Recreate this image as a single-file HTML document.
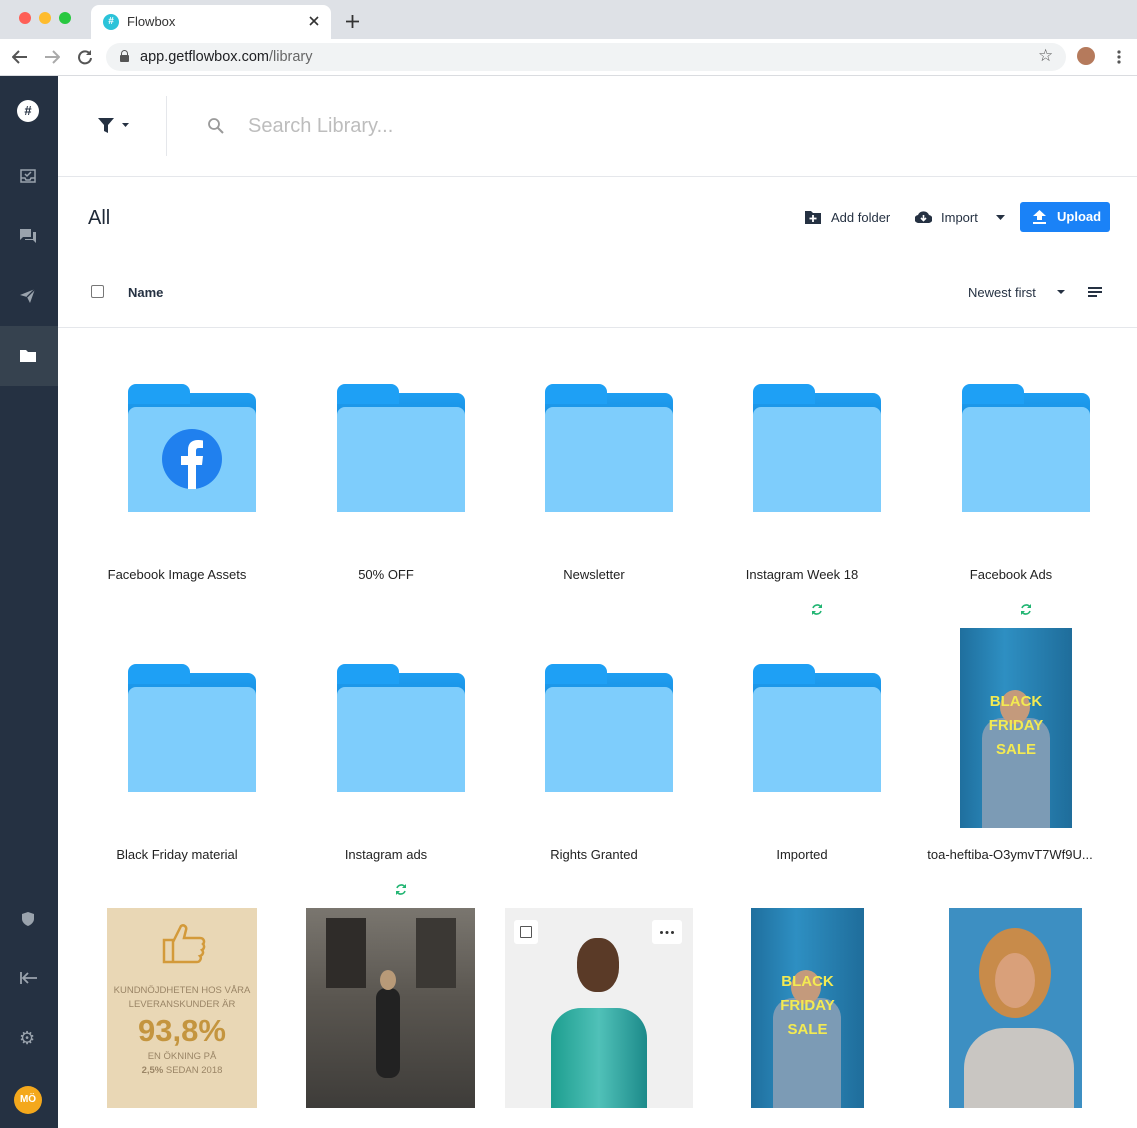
<!DOCTYPE html><html><head><style>
*{margin:0;padding:0;box-sizing:border-box}
body{width:1137px;height:1128px;overflow:hidden;font-family:"Liberation Sans",sans-serif;background:#fff;position:relative;color:#1f2937}
.a{position:absolute}
.fold{position:absolute;width:128px;height:128px}
.fold .t{position:absolute;left:0;top:0;width:62px;height:20px;background:#1ea0f5;border-radius:8px 8px 0 0}
.fold .b{position:absolute;left:0;top:9px;width:128px;height:40px;background:linear-gradient(#1f9ff2,#1587d8);border-radius:8px 8px 0 0}
.fold .f{position:absolute;left:0;top:23px;width:128px;height:105px;background:#7ecdfc;border-radius:8px 8px 0 0}
.lbl{position:absolute;width:200px;text-align:center;font-size:13px;color:#222}
.sync{position:absolute}
svg{position:absolute}
</style></head><body>
<!-- browser chrome -->
<div class="a" style="left:0;top:0;width:1137px;height:39px;background:#dee1e6"></div>
<div class="a" style="left:19px;top:12px;width:12px;height:12px;border-radius:50%;background:#fe5f57"></div>
<div class="a" style="left:39px;top:12px;width:12px;height:12px;border-radius:50%;background:#febc2e"></div>
<div class="a" style="left:59px;top:12px;width:12px;height:12px;border-radius:50%;background:#28c840"></div>
<div class="a" style="left:91px;top:5px;width:240px;height:34px;background:#fff;border-radius:8px 8px 0 0"></div>
<div class="a" style="left:103px;top:14px;width:16px;height:16px;border-radius:50%;background:#2bc3d9;color:#fff;font-size:10px;font-weight:bold;text-align:center;line-height:16px">#</div>
<div class="a" style="left:127px;top:14px;font-size:13px;color:#333">Flowbox</div>
<svg style="left:309px;top:16px" width="10" height="10"><path d="M1 1L9 9M9 1L1 9" stroke="#333" stroke-width="1.6"/></svg>
<svg style="left:346px;top:15px" width="13" height="13"><path d="M6.5 0V13M0 6.5H13" stroke="#333" stroke-width="1.8"/></svg>
<div class="a" style="left:0;top:39px;width:1137px;height:37px;background:#fff;border-bottom:1px solid #dadce0"></div>
<svg style="left:12px;top:50px" width="16" height="14"><path d="M15 7H2M7 1L1 7L7 13" stroke="#555" stroke-width="2" fill="none"/></svg>
<svg style="left:44px;top:50px" width="16" height="14"><path d="M1 7H14M9 1L15 7L9 13" stroke="#aaa" stroke-width="2" fill="none"/></svg>
<svg style="left:77px;top:49px" width="16" height="16"><path d="M13 5A6 6 0 1 0 14 9" stroke="#555" stroke-width="2" fill="none"/><path d="M14 1V6H9" fill="#555"/></svg>
<div class="a" style="left:106px;top:43px;width:960px;height:28px;background:#f1f3f4;border-radius:14px"></div>
<div class="a" style="left:120px;top:55px;width:9px;height:7px;background:#555;border-radius:1px"></div>
<div class="a" style="left:121px;top:50px;width:7px;height:7px;border:1.5px solid #555;border-radius:4px 4px 0 0"></div>
<div class="a" style="left:140px;top:49px;font-size:14.5px;color:#202124">app.getflowbox.com<span style="color:#666">/library</span></div>
<div class="a" style="left:1038px;top:46px;font-size:17px;color:#555">☆</div>
<div class="a" style="left:1077px;top:47px;width:18px;height:18px;border-radius:50%;background:#b57a5c"></div>
<svg style="left:1117px;top:50px" width="4" height="14"><circle cx="2" cy="2" r="1.6" fill="#555"/><circle cx="2" cy="7" r="1.6" fill="#555"/><circle cx="2" cy="12" r="1.6" fill="#555"/></svg>
<!-- sidebar -->
<div class="a" style="left:0;top:76px;width:58px;height:1052px;background:#253142">
<div class="a" style="left:0;top:250px;width:58px;height:60px;background:#36424f"></div>
<div class="a" style="left:17px;top:24px;width:22px;height:22px;border-radius:50%;background:#fff;color:#253142;font-weight:bold;font-size:13px;text-align:center;line-height:22px">#</div>
<svg style="left:20px;top:93px" width="16" height="14"><path d="M1 1H15V13H1Z M1 9H5L6 11H10L11 9H15" stroke="#9aa3ad" stroke-width="1.5" fill="none"/><path d="M5 5L7 7L11 3" stroke="#9aa3ad" stroke-width="1.5" fill="none"/></svg>
<svg style="left:20px;top:153px" width="16" height="14"><path d="M0 0H11V8H3L0 11Z" fill="#9aa3ad"/><path d="M13 3H16V14L13 11H5V10H13Z" fill="#9aa3ad"/></svg>
<svg style="left:20px;top:213px" width="16" height="14"><path d="M0 6L15 0L10 14L7 8Z" fill="#9aa3ad"/><path d="M7 8L15 0" stroke="#253142" stroke-width="1.3"/></svg>
<svg style="left:20px;top:273px" width="16" height="13"><path d="M0 1H6L8 3H16V13H0Z" fill="#fff"/></svg>
<svg style="left:22px;top:836px" width="12" height="14"><path d="M6 0L12 2V7C12 10 9 13 6 14C3 13 0 10 0 7V2Z" fill="#9aa3ad"/></svg>
<svg style="left:20px;top:896px" width="17" height="12"><path d="M1 0V12M3 6H17M8 1L3 6L8 11" stroke="#9aa3ad" stroke-width="1.8" fill="none"/></svg>
<div class="a" style="left:19px;top:952px;color:#9aa3ad;font-size:18px">⚙</div>
<div class="a" style="left:14px;top:1010px;width:28px;height:28px;border-radius:50%;background:#f4a81c;color:#fff;font-size:10px;font-weight:bold;text-align:center;line-height:28px">MÖ</div>
</div>
<!-- top bar -->
<div class="a" style="left:58px;top:176px;width:1079px;height:1px;background:#e5e7eb"></div>
<svg style="left:98px;top:118px" width="34" height="16"><path d="M0 0H16L10 7V15L6 13V7Z" fill="#253142"/><path d="M24 5H31L27.5 9Z" fill="#253142"/></svg>
<div class="a" style="left:166px;top:96px;width:1px;height:60px;background:#e5e7eb"></div>
<svg style="left:208px;top:118px" width="16" height="16"><circle cx="6" cy="6" r="5" stroke="#9a9a9a" stroke-width="1.8" fill="none"/><path d="M10 10L15 15" stroke="#9a9a9a" stroke-width="2"/></svg>
<div class="a" style="left:248px;top:115px;font-size:20px;color:#bdbdbd">Search Library...</div>
<!-- header -->
<div class="a" style="left:88px;top:207px;font-size:20px;color:#1f2937">All</div>
<svg style="left:805px;top:210px" width="16" height="14"><path d="M0 1H6L8 3H16V14H0Z" fill="#253142"/><path d="M8 5V12M4.5 8.5H11.5" stroke="#fff" stroke-width="1.8"/></svg>
<div class="a" style="left:831px;top:210px;font-size:13px;color:#253142">Add folder</div>
<svg style="left:915px;top:210px" width="17" height="13"><path d="M4 13A4 4 0 0 1 3 5A6 6 0 0 1 14 5A4 4 0 0 1 13 13Z" fill="#253142"/><path d="M8.5 5V10M6 8L8.5 10.5L11 8" stroke="#fff" stroke-width="1.6" fill="none"/></svg>
<div class="a" style="left:941px;top:210px;font-size:13px;color:#253142">Import</div>
<svg style="left:996px;top:215px" width="9" height="5"><path d="M0 0H9L4.5 5Z" fill="#253142"/></svg>
<div class="a" style="left:1020px;top:202px;width:90px;height:30px;background:#1a82f7;border-radius:3px;color:#fff;font-size:13px;font-weight:bold;line-height:30px;padding-left:37px">Upload</div>
<svg style="left:1033px;top:210px" width="13" height="14"><path d="M6.5 0L13 6H9V10H4V6H0Z" fill="#fff"/><rect x="0" y="12" width="13" height="2" fill="#fff"/></svg>
<div class="a" style="left:91px;top:285px;width:13px;height:13px;border:1.5px solid #777;border-radius:2px"></div>
<div class="a" style="left:128px;top:285px;font-size:13px;font-weight:bold;color:#253142">Name</div>
<div class="a" style="left:968px;top:285px;font-size:13px;color:#253142">Newest first</div>
<svg style="left:1057px;top:290px" width="8" height="4"><path d="M0 0H8L4 4Z" fill="#253142"/></svg>
<svg style="left:1088px;top:287px" width="14" height="10"><path d="M0 1H14M0 5H14M0 9H9" stroke="#253142" stroke-width="2"/></svg>
<div class="a" style="left:58px;top:327px;width:1079px;height:1px;background:#e5e7eb"></div>
<!-- folders row 1 -->
<div class="fold" style="left:128px;top:384px"><div class="b"></div><div class="t"></div><div class="f"></div>
<svg style="left:34px;top:45px" width="60" height="60"><circle cx="30" cy="30" r="30" fill="#2080ee"/><path d="M26 60V36H19V27H26V21C26 14 30 11 36 11C39 11 41 11.5 41 11.5V19H37C34 19 34 20.5 34 23V27H41L40 36H34V60Z" fill="#fff"/></svg></div>
<div class="fold" style="left:337px;top:384px"><div class="b"></div><div class="t"></div><div class="f"></div></div>
<div class="fold" style="left:545px;top:384px"><div class="b"></div><div class="t"></div><div class="f"></div></div>
<div class="fold" style="left:753px;top:384px"><div class="b"></div><div class="t"></div><div class="f"></div></div>
<div class="fold" style="left:962px;top:384px"><div class="b"></div><div class="t"></div><div class="f"></div></div>
<div class="lbl" style="left:77px;top:567px">Facebook Image Assets</div>
<div class="lbl" style="left:286px;top:567px">50% OFF</div>
<div class="lbl" style="left:494px;top:567px">Newsletter</div>
<div class="lbl" style="left:702px;top:567px">Instagram Week 18</div>
<div class="lbl" style="left:911px;top:567px">Facebook Ads</div>
<svg style="left:811px;top:603px" width="12" height="13"><path d="M10 4A4.5 4.5 0 0 0 2 5M2 9A4.5 4.5 0 0 0 10 8" stroke="#22b573" stroke-width="1.6" fill="none"/><path d="M11 1V5H7Z M1 12V8H5Z" fill="#22b573"/></svg>
<svg style="left:1020px;top:603px" width="12" height="13"><path d="M10 4A4.5 4.5 0 0 0 2 5M2 9A4.5 4.5 0 0 0 10 8" stroke="#22b573" stroke-width="1.6" fill="none"/><path d="M11 1V5H7Z M1 12V8H5Z" fill="#22b573"/></svg>
<!-- row 2 -->
<div class="fold" style="left:128px;top:664px"><div class="b"></div><div class="t"></div><div class="f"></div></div>
<div class="fold" style="left:337px;top:664px"><div class="b"></div><div class="t"></div><div class="f"></div></div>
<div class="fold" style="left:545px;top:664px"><div class="b"></div><div class="t"></div><div class="f"></div></div>
<div class="fold" style="left:753px;top:664px"><div class="b"></div><div class="t"></div><div class="f"></div></div>
<div class="a" style="left:960px;top:628px;width:112px;height:200px;background:linear-gradient(90deg,#1f6f9e,#2e8fc2 40%,#1f6d9b);overflow:hidden">
<div class="a" style="left:22px;top:90px;width:68px;height:110px;background:#7c9bb5;border-radius:20px 20px 0 0"></div>
<div class="a" style="left:40px;top:62px;width:30px;height:34px;background:#c49a7c;border-radius:50%"></div>
<div class="a" style="left:0;top:62px;width:112px;text-align:center;color:#f3ea52;font-weight:bold;font-size:15px;line-height:24px">BLACK<br>FRIDAY<br>SALE</div></div>
<div class="lbl" style="left:77px;top:847px">Black Friday material</div>
<div class="lbl" style="left:286px;top:847px">Instagram ads</div>
<div class="lbl" style="left:494px;top:847px">Rights Granted</div>
<div class="lbl" style="left:702px;top:847px">Imported</div>
<div class="lbl" style="left:910px;top:847px">toa-heftiba-O3ymvT7Wf9U...</div>
<svg style="left:395px;top:883px" width="12" height="13"><path d="M10 4A4.5 4.5 0 0 0 2 5M2 9A4.5 4.5 0 0 0 10 8" stroke="#22b573" stroke-width="1.6" fill="none"/><path d="M11 1V5H7Z M1 12V8H5Z" fill="#22b573"/></svg>
<!-- row 3 -->
<div class="a" style="left:107px;top:908px;width:150px;height:200px;background:#e9d7b5;text-align:center;color:#b8924a">
<svg style="left:55px;top:14px" width="44" height="42"><path d="M2 18H11V40H2Z M11 20L19 4C22 2 25 5 24 8L22 16H38C42 16 43 20 41 22C43 24 42 27 40 28C42 30 41 33 38 34C40 36 38 40 35 40H11" stroke="#d39a3a" stroke-width="2.5" fill="none"/></svg>
<div style="margin-top:76px;font-size:9.5px;line-height:14px;color:#9a8566">KUNDNÖJDHETEN HOS VÅRA<br>LEVERANSKUNDER ÄR</div>
<div style="font-size:31px;font-weight:bold;color:#c4953f;line-height:38px">93,8%</div>
<div style="font-size:9.5px;line-height:14px;color:#9a8566">EN ÖKNING PÅ<br><b>2,5%</b> SEDAN 2018</div></div>
<div class="a" style="left:306px;top:908px;width:169px;height:200px;background:linear-gradient(#7a766f,#5a5650 45%,#3e3c39);overflow:hidden">
<div class="a" style="left:20px;top:10px;width:40px;height:70px;background:#2f2c29"></div><div class="a" style="left:110px;top:10px;width:40px;height:70px;background:#3b3834"></div>
<div class="a" style="left:70px;top:80px;width:24px;height:90px;background:#222;border-radius:10px"></div>
<div class="a" style="left:74px;top:62px;width:16px;height:20px;background:#b89a78;border-radius:50%"></div></div>
<div class="a" style="left:505px;top:908px;width:188px;height:200px;background:#f0f0f0;overflow:hidden">
<div class="a" style="left:46px;top:100px;width:96px;height:100px;background:linear-gradient(90deg,#1d9e8f,#50c1b8 50%,#1c8a8a);border-radius:30px 30px 0 0"></div>
<div class="a" style="left:72px;top:30px;width:42px;height:54px;background:#5a3a27;border-radius:45%"></div>
<div class="a" style="left:9px;top:12px;width:24px;height:24px;background:#fff;border-radius:3px"></div><div class="a" style="left:15px;top:18px;width:12px;height:12px;border:1.5px solid #555;border-radius:1px"></div>
<div class="a" style="left:147px;top:12px;width:30px;height:24px;background:#fff;border-radius:3px"></div>
<svg style="left:155px;top:23px" width="14" height="3"><circle cx="1.5" cy="1.5" r="1.5" fill="#333"/><circle cx="7" cy="1.5" r="1.5" fill="#333"/><circle cx="12.5" cy="1.5" r="1.5" fill="#333"/></svg></div>
<div class="a" style="left:751px;top:908px;width:113px;height:200px;background:linear-gradient(90deg,#1f6f9e,#2e8fc2 40%,#1f6d9b);overflow:hidden">
<div class="a" style="left:22px;top:90px;width:68px;height:110px;background:#7c9bb5;border-radius:20px 20px 0 0"></div>
<div class="a" style="left:40px;top:62px;width:30px;height:34px;background:#c49a7c;border-radius:50%"></div>
<div class="a" style="left:0;top:62px;width:113px;text-align:center;color:#f3ea52;font-weight:bold;font-size:15px;line-height:24px">BLACK<br>FRIDAY<br>SALE</div></div>
<div class="a" style="left:949px;top:908px;width:133px;height:200px;background:#3d8fc2;overflow:hidden">
<div class="a" style="left:15px;top:120px;width:110px;height:90px;background:#c9c6c2;border-radius:40px 40px 0 0"></div>
<div class="a" style="left:30px;top:20px;width:72px;height:90px;background:#c88b4a;border-radius:50%"></div>
<div class="a" style="left:46px;top:45px;width:40px;height:55px;background:#d9a07a;border-radius:50%"></div></div>
</body></html>
